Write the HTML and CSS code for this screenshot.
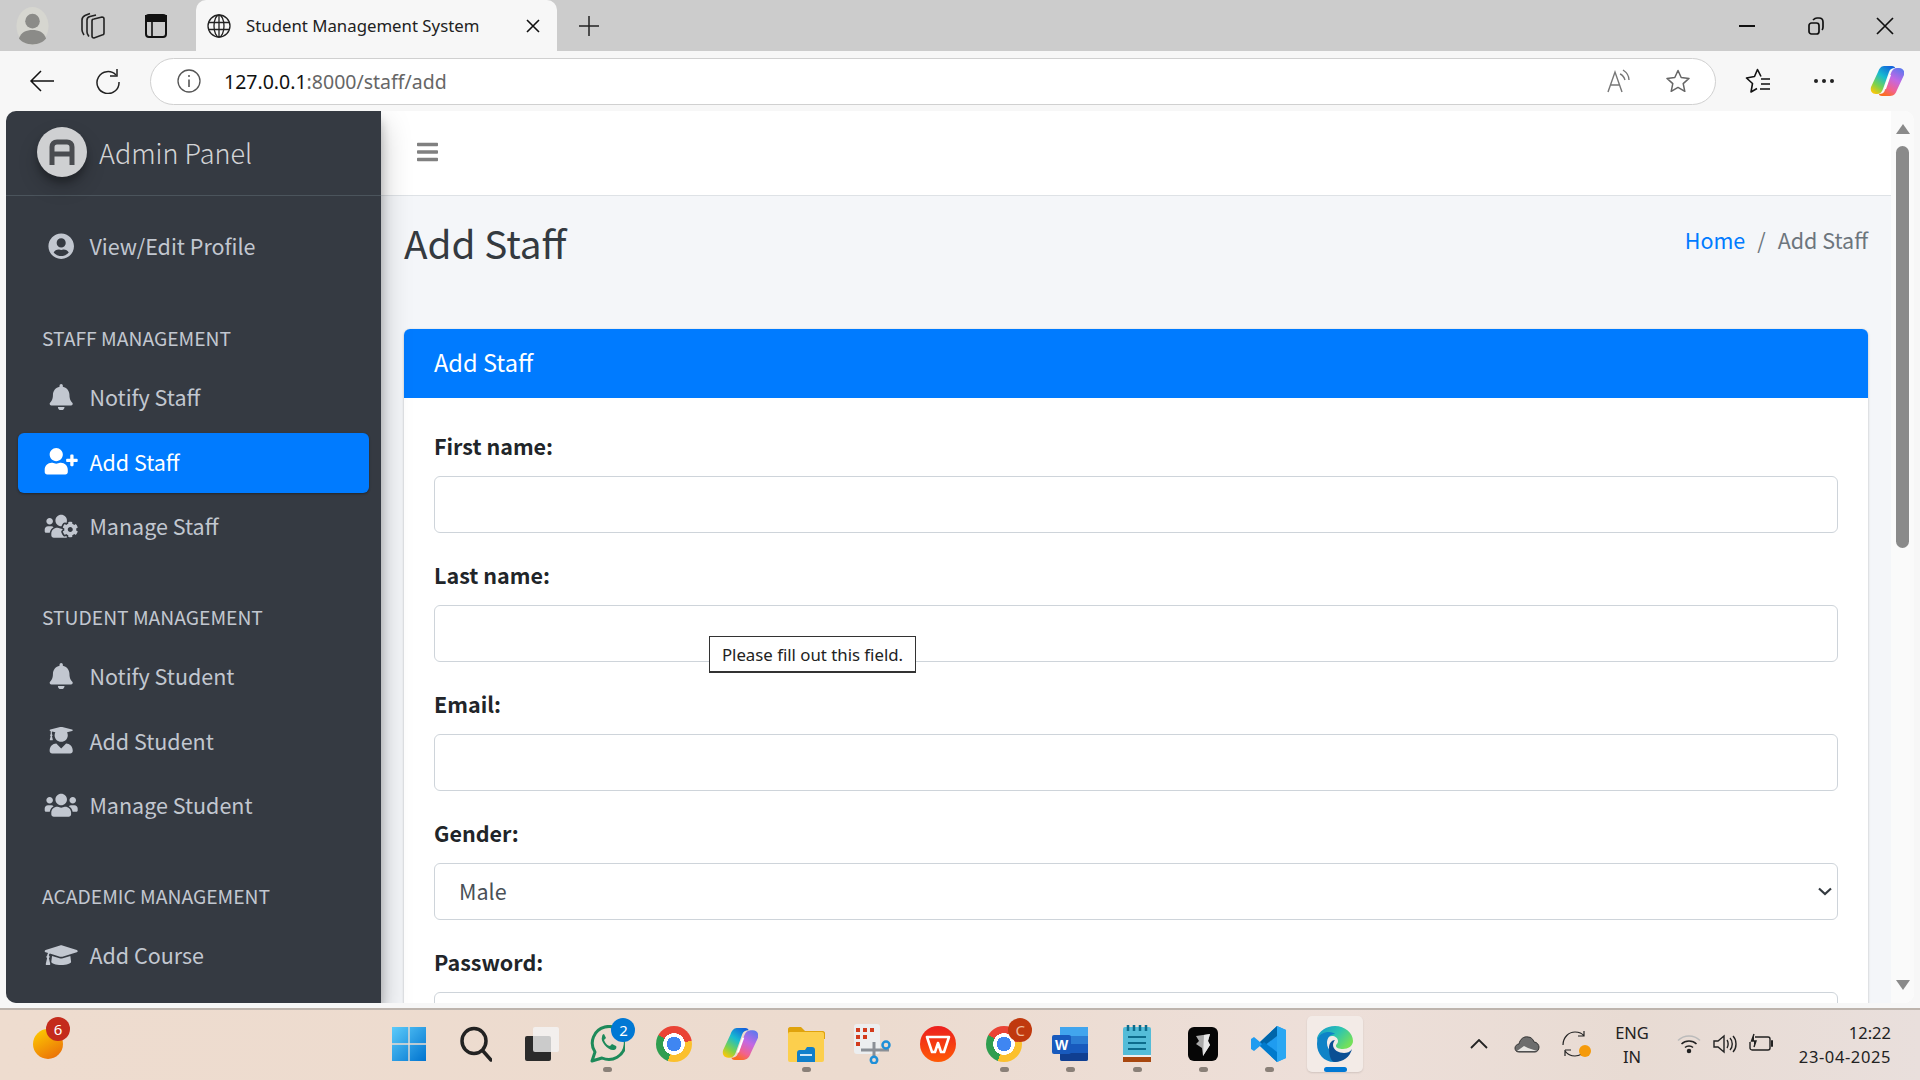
FILE: index.html
```html
<!DOCTYPE html>
<html lang="en">
<head>
    <meta charset="UTF-8">
    <meta name="viewport" content="width=device-width, initial-scale=1.0">
    <title>Student Management System</title>
    <link rel="stylesheet" href="styles.css">
</head>
<body>
<div class="screen">

    <!-- browser tabs -->
    <div class="tabstrip">
        <svg class="avatar" viewBox="0 0 34 40"><ellipse cx="17" cy="20" rx="16.5" ry="19.5" fill="#d6d6d0"/><circle cx="17" cy="15" r="7.5" fill="#8b8b88"/><path d="M3 33c2-7 8-9 14-9s12 2 14 9c-3 4-8 6-14 6S6 37 3 33z" fill="#8b8b88"/></svg>
        <svg class="strip-icon collections" viewBox="0 0 24 28" fill="none" stroke="#222" stroke-width="1.600"><path d="M11 9c0-1 1-2 2-2l8-2c1 0 2 1 2 2v14c0 1-1 2-2 2l-8 3c-1 0-2-1-2-2z"/><path d="M15 3l-6 1.500c-2 .5-3 2-3 3.500v12c0 2 1 3 2 4.500"/><path d="M9 1.500 4 3.500C2 4.500 1 6 1 8v10c0 2 1 3.500 2 5"/></svg>
        <svg class="strip-icon sidepane" viewBox="0 0 24 28" fill="none" stroke="#111" stroke-width="2"><rect x="2" y="3" width="20" height="22" rx="3"/><path d="M2 4h20v5H2z" fill="#111"/><path d="M8 9v15" stroke-width="1.600"/></svg>
        <div class="tab">
            <svg class="globe" viewBox="0 0 24 24" fill="none" stroke="#222" stroke-width="1.300"><circle cx="12" cy="12" r="11"/><ellipse cx="12" cy="12" rx="5" ry="11"/><path d="M1.500 8.500h21M1.500 15.500h21M12 1v22"/></svg>
            <span class="tab-title">Student Management System</span>
            <svg class="tab-close" viewBox="0 0 14 14" stroke="#111" stroke-width="1.600"><path d="M1 1l12 12M13 1 1 13"/></svg>
        </div>
        <svg class="new-tab" viewBox="0 0 20 20" stroke="#222" stroke-width="1.500"><path d="M10 0v20M0 10h20"/></svg>
        <div class="window-controls">
            <span class="win-btn"><svg width="16" height="16" viewBox="0 0 16 16" stroke="#111" stroke-width="2"><path d="M0 8h16"/></svg></span>
            <span class="win-btn"><svg width="18" height="18" viewBox="0 0 18 18" fill="none" stroke="#111" stroke-width="1.700"><rect x="2" y="6" width="10" height="11" rx="2.500"/><path d="M6 3c1-1 2-2 4-2h2c3 0 4 2 4 4v5c0 1 0 2-1 3"/></svg></span>
            <span class="win-btn"><svg width="18" height="18" viewBox="0 0 18 18" stroke="#111" stroke-width="1.700"><path d="M1 1l16 16M17 1 1 17"/></svg></span>
        </div>
    </div>

    <!-- address bar -->
    <div class="toolbar">
        <span class="tool-btn"><svg width="26" height="24" viewBox="0 0 26 24" fill="none" stroke="#111" stroke-width="1.500"><path d="M25 12H2M12 2 2 12l10 10"/></svg></span>
        <span class="tool-btn"><svg width="26" height="26" viewBox="0 0 26 26" fill="none" stroke="#222" stroke-width="1.500"><path d="M21 7a11 11 0 1 0 3 7"/><path d="M22 1v7h-7"/></svg></span>
        <div class="addressbar">
            <svg class="info-icon" viewBox="0 0 24 24" fill="none" stroke="#555" stroke-width="1.300"><circle cx="12" cy="12" r="11"/><path d="M12 10.500v7.500" stroke-width="1.600"/><circle cx="12" cy="7" r="1" fill="#555" stroke="none"/></svg>
            <span class="url"><span class="url-host">127.0.0.1</span>:8000/staff/add</span>
            <svg class="addr-icon read-aloud" viewBox="0 0 24 24" fill="none" stroke="#777" stroke-width="1.400"><path d="M1 23 8 3l7 20M4 16h8"/><path d="M13 5c3 1 4 3 5 6M16 1c3 2 6 5 6 10"/></svg>
            <svg class="addr-icon" viewBox="0 0 24 24" fill="none" stroke="#666" stroke-width="1.500"><path d="m12 1.500 3.200 7 7.800.9-5.800 5.200 1.600 7.700L12 18.400l-6.800 3.900 1.600-7.700L1 9.400l7.800-.9z" stroke-linejoin="round"/></svg>
        </div>
        <span class="tool-btn"><svg width="26" height="26" viewBox="0 0 26 26" fill="none" stroke="#111" stroke-width="1.600" stroke-linejoin="round"><path d="M16 8.500 12.500 1.500 9.500 8.500 1.500 10l6 5.500-1.500 8.500 6-3.500"/><path d="M16 11h9M16 16h9M15 21h10"/></svg></span>
        <span class="tool-btn"><svg width="22" height="6" viewBox="0 0 22 6" fill="#222"><circle cx="3" cy="3" r="2"/><circle cx="11" cy="3" r="2"/><circle cx="19" cy="3" r="2"/></svg></span>
        <span class="tool-btn copilot-slot"><svg width="34" height="32" viewBox="0 0 34 32"><use href="#copilot-mark"/></svg></span>
    </div>

    <!-- page -->
    <div class="frame">
        <div class="viewport">
            <aside class="sidebar">
                <div class="brand">
                    <span class="brand-logo"><svg width="26" height="26" viewBox="0 0 26 26" fill="none" stroke="#4a4c50" stroke-width="5"><path d="M3 26V8c0-3 2-5 5-5h10c3 0 5 2 5 5v18M3 15h20"/></svg></span>
                    <span class="brand-text">Admin Panel</span>
                </div>
                <nav class="side-nav">
                    <a class="nav-link nav-profile" href="#"><svg class="nav-icon" viewBox="0 0 496 512"><path d="M248 8C111 8 0 119 0 256s111 248 248 248 248-111 248-248S385 8 248 8zm0 96c48.600 0 88 39.400 88 88s-39.400 88-88 88-88-39.400-88-88 39.400-88 88-88zm0 344c-58.700 0-111.300-26.600-146.500-68.200 18.800-35.400 55.600-59.800 98.500-59.800 2.400 0 4.800.4 7.100 1.100 13 4.200 26.600 6.900 40.900 6.900 14.300 0 28-2.700 40.900-6.900 2.300-.7 4.700-1.100 7.100-1.100 42.900 0 79.700 24.400 98.500 59.800C359.300 421.400 306.700 448 248 448z"/></svg>View/Edit Profile</a>

                    <div class="nav-header">STAFF MANAGEMENT</div>
                    <a class="nav-link" href="#"><svg class="nav-icon" viewBox="0 0 448 512"><use href="#fa-bell"/></svg>Notify Staff</a>
                    <a class="nav-link active" href="#"><svg class="nav-icon" viewBox="0 0 640 512"><path d="M624 208h-64v-64c0-8.800-7.200-16-16-16h-32c-8.800 0-16 7.200-16 16v64h-64c-8.800 0-16 7.200-16 16v32c0 8.800 7.200 16 16 16h64v64c0 8.800 7.200 16 16 16h32c8.800 0 16-7.200 16-16v-64h64c8.800 0 16-7.200 16-16v-32c0-8.800-7.200-16-16-16zm-400 48c70.700 0 128-57.300 128-128S294.700 0 224 0 96 57.300 96 128s57.300 128 128 128zm89.600 32h-16.700c-22.200 10.200-46.900 16-72.900 16s-50.600-5.800-72.900-16h-16.700C60.200 288 0 348.200 0 422.400V464c0 26.500 21.500 48 48 48h352c26.500 0 48-21.500 48-48v-41.600c0-74.200-60.200-134.400-134.400-134.400z"/></svg>Add Staff</a>
                    <a class="nav-link" href="#"><svg class="nav-icon" viewBox="0 0 640 512"><path d="M610.500 341.300c2.600-14.100 2.600-28.500 0-42.600l25.800-14.900c3-1.700 4.300-5.200 3.300-8.500-6.700-21.600-18.200-41.200-33.200-57.400-2.300-2.500-6-3.100-9-1.400l-25.800 14.900c-10.900-9.300-23.400-16.500-36.900-21.300v-29.800c0-3.400-2.400-6.400-5.700-7.100-22.300-5-45-4.800-66.200 0-3.300.7-5.700 3.700-5.700 7.100v29.800c-13.500 4.800-26 12-36.900 21.300l-25.800-14.900c-2.900-1.700-6.700-1.100-9 1.400-15 16.200-26.500 35.800-33.200 57.400-1 3.300.4 6.800 3.300 8.500l25.800 14.900c-2.600 14.100-2.600 28.500 0 42.600l-25.800 14.900c-3 1.700-4.300 5.200-3.300 8.500 6.700 21.600 18.200 41.100 33.200 57.400 2.300 2.500 6 3.100 9 1.400l25.800-14.900c10.900 9.300 23.400 16.500 36.900 21.300v29.800c0 3.400 2.400 6.400 5.700 7.100 22.300 5 45 4.800 66.200 0 3.300-.7 5.700-3.700 5.700-7.100v-29.800c13.500-4.800 26-12 36.900-21.300l25.800 14.900c2.900 1.700 6.700 1.100 9-1.400 15-16.200 26.500-35.800 33.200-57.400 1-3.300-.4-6.800-3.300-8.500l-25.800-14.900zM496 368.500c-26.800 0-48.500-21.800-48.500-48.500s21.800-48.500 48.500-48.500 48.500 21.800 48.500 48.500-21.700 48.500-48.500 48.500zM96 224c35.300 0 64-28.700 64-64s-28.700-64-64-64-64 28.700-64 64 28.700 64 64 64zm224 32c1.900 0 3.700-.5 5.600-.6 8.300-21.700 20.500-42.100 36.300-59.200 7.400-8 17.900-12.600 28.900-12.600 6.900 0 13.700 1.800 19.600 5.300l7.900 4.600c.8-.5 1.600-.9 2.400-1.400 7-14.600 11.200-30.800 11.200-48 0-61.900-50.100-112-112-112S208 82.100 208 144c0 61.900 50.100 112 112 112zm105.200 194.500c-2.300-1.200-4.600-2.600-6.800-3.900-8.200 4.800-15.300 9.800-27.500 9.800-10.900 0-21.400-4.600-28.900-12.600-18.300-19.800-32.300-43.900-40.200-69.600-10.700-34.500 24.900-49.700 25.800-50.300-.1-2.600-.1-5.200 0-7.800l-7.900-4.600c-3.800-2.200-7-5-9.800-8.100-3.300.2-6.500.6-9.800.6-24.600 0-47.600-6-68.500-16h-8.300C179.600 288 128 339.600 128 403.200V432c0 26.500 21.500 48 48 48h255.400c-3.700-6-6.200-12.800-6.200-20.300v-9.200zM173.100 274.600C161.500 263.100 145.600 256 128 256H64c-35.300 0-64 28.700-64 64v32c0 17.700 14.300 32 32 32h65.900c6.300-47.400 34.900-87.300 75.200-109.400z"/></svg>Manage Staff</a>

                    <div class="nav-header">STUDENT MANAGEMENT</div>
                    <a class="nav-link" href="#"><svg class="nav-icon" viewBox="0 0 448 512"><use href="#fa-bell"/></svg>Notify Student</a>
                    <a class="nav-link" href="#"><svg class="nav-icon" viewBox="0 0 448 512"><path d="M319.400 320.600L224 416l-95.400-95.400C57.100 323.700 0 382.200 0 454.400v9.600c0 26.500 21.500 48 48 48h352c26.500 0 48-21.500 48-48v-9.600c0-72.200-57.100-130.700-128.600-133.800zM13.600 79.800l6.400 1.500v58.400c-7 4.200-12 11.500-12 20.300 0 8.400 4.600 15.400 11.100 19.700L3.500 242c-1.700 6.900 2.100 14 7.600 14h41.800c5.500 0 9.300-7.100 7.600-14l-15.600-62.300C51.400 175.400 56 168.400 56 160c0-8.800-5-16.100-12-20.300V87.100l66 15.900c-8.600 17.200-14 36.400-14 57 0 70.700 57.300 128 128 128s128-57.300 128-128c0-20.600-5.300-39.800-14-57l96.300-23.200c18.200-4.400 18.200-27.100 0-31.500l-190.400-46c-13-3.100-26.700-3.100-39.700 0L13.600 48.200c-18.100 4.400-18.100 27.200 0 31.600z"/></svg>Add Student</a>
                    <a class="nav-link" href="#"><svg class="nav-icon" viewBox="0 0 640 512"><path d="M96 224c35.300 0 64-28.700 64-64s-28.700-64-64-64-64 28.700-64 64 28.700 64 64 64zm448 0c35.300 0 64-28.700 64-64s-28.700-64-64-64-64 28.700-64 64 28.700 64 64 64zm32 32h-64c-17.600 0-33.500 7.100-45.100 18.600 40.300 22.100 68.900 62 75.100 109.400h66c17.700 0 32-14.300 32-32v-32c0-35.300-28.700-64-64-64zm-256 0c61.900 0 112-50.100 112-112S381.900 32 320 32 208 82.100 208 144s50.100 112 112 112zm76.800 32h-8.300c-20.800 10-43.900 16-68.500 16s-47.600-6-68.500-16h-8.300C179.600 288 128 339.600 128 403.200V432c0 26.500 21.500 48 48 48h288c26.500 0 48-21.500 48-48v-28.800c0-63.600-51.600-115.200-115.200-115.200zm-223.700-13.400C161.500 263.100 145.600 256 128 256H64c-35.300 0-64 28.700-64 64v32c0 17.700 14.300 32 32 32h65.900c6.300-47.400 34.900-87.300 75.200-109.400z"/></svg>Manage Student</a>

                    <div class="nav-header">ACADEMIC MANAGEMENT</div>
                    <a class="nav-link" href="#"><svg class="nav-icon" viewBox="0 0 640 512"><path d="M622.340 153.200L343.400 67.500c-15.200-4.670-31.600-4.670-46.790 0L17.660 153.200c-23.540 7.230-23.540 38.360 0 45.590l48.630 14.940c-10.670 13.190-17.230 29.280-17.880 46.900C38.780 266.150 32 276.110 32 288c0 10.780 5.680 19.850 13.860 25.650L20.330 428.530C18.110 438.520 25.710 448 35.940 448h56.110c10.240 0 17.840-9.480 15.620-19.470L82.140 313.650C90.320 307.850 96 298.780 96 288c0-11.570-6.470-21.250-15.660-26.870.76-15.020 8.440-28.300 20.690-36.720L296.600 284.500c9.060 2.780 26.440 6.250 46.790 0l278.950-85.700c23.550-7.240 23.550-38.360 0-45.600zM352.790 315.090c-28.530 8.760-52.840 3.920-65.590 0l-145.020-44.550L128 384c0 35.350 85.960 64 192 64s192-28.650 192-64l-14.180-113.470-145.030 44.560z"/></svg>Add Course</a>
                </nav>
            </aside>

            <main class="main">
                <div class="navbar">
                    <svg class="bars" viewBox="0 0 448 512"><path d="M16 132h416c8.837 0 16-7.163 16-16V76c0-8.837-7.163-16-16-16H16C7.163 60 0 67.163 0 76v40c0 8.837 7.163 16 16 16zm0 160h416c8.837 0 16-7.163 16-16v-40c0-8.837-7.163-16-16-16H16c-8.837 0-16 7.163-16 16v40c0 8.837 7.163 16 16 16zm0 160h416c8.837 0 16-7.163 16-16v-40c0-8.837-7.163-16-16-16H16c-8.837 0-16 7.163-16 16v40c0 8.837 7.163 16 16 16z"/></svg>
                </div>
                <div class="content">
                    <div class="content-header">
                        <h1>Add Staff</h1>
                        <div class="breadcrumb"><a href="#">Home</a><span class="sep">/</span><span>Add Staff</span></div>
                    </div>
                    <div class="card">
                        <div class="card-header">Add Staff</div>
                        <form class="card-body">
                            <div class="form-group">
                                <label>First name:</label>
                                <input class="form-control" type="text">
                            </div>
                            <div class="form-group">
                                <label>Last name:</label>
                                <input class="form-control" type="text">
                                <div class="validation-tip">Please fill out this field.</div>
                            </div>
                            <div class="form-group">
                                <label>Email:</label>
                                <input class="form-control" type="text">
                            </div>
                            <div class="form-group">
                                <label>Gender:</label>
                                <div class="select-wrap">
                                    <select class="form-control">
                                        <option>Male</option>
                                        <option>Female</option>
                                    </select>
                                    <svg class="select-arrow" viewBox="0 0 14 9" fill="none" stroke="#343a40" stroke-width="2.200"><path d="M1 1.500 7 7l6-5.500"/></svg>
                                </div>
                            </div>
                            <div class="form-group">
                                <label>Password:</label>
                                <input class="form-control" type="password">
                            </div>
                        </form>
                    </div>
                </div>
            </main>

            <div class="scrollbar">
                <span class="arrow-up"></span>
                <span class="thumb"></span>
                <span class="arrow-down"></span>
            </div>
        </div>
    </div>

    <!-- windows taskbar -->
    <footer class="taskbar">
        <div class="widgets">
            <span class="weather"><span class="badge badge-red">6</span></span>
        </div>
        <div class="task-icons">
            <span class="task"><svg width="36" height="36" viewBox="0 0 36 36"><defs><linearGradient id="win" x1="0" y1="0" x2="1" y2="1"><stop offset="0" stop-color="#5ccbfa"/><stop offset="1" stop-color="#0073cf"/></linearGradient></defs><path d="M1 1h16.300v16.300H1zM18.700 1H35v16.300H18.700zM1 18.700h16.300V35H1zM18.700 18.700H35V35H18.700z" fill="url(#win)"/></svg></span>
            <span class="task"><svg width="34" height="36" viewBox="0 0 34 36" fill="none" stroke="#222" stroke-width="3.500" stroke-linecap="round"><ellipse cx="16" cy="15" rx="12" ry="12.500"/><path d="m25 25 8 9"/></svg></span>
            <span class="task"><svg width="36" height="36" viewBox="0 0 36 36"><rect x="2" y="10" width="26" height="25" rx="2" fill="#2b2b2b"/><rect x="10" y="1" width="26" height="25" rx="2" fill="#f4f4f4" fill-opacity=".8"/></svg></span>
            <span class="task on"><svg width="36" height="38" viewBox="0 0 36 38" fill="none" stroke="#1d8a5a" stroke-width="3"><path d="M3 36l3-9A16.500 16.500 0 1 1 13 33z" stroke-linejoin="round"/><path d="M13 12c-2 4 6 14 12 13 2 0 3-3 2-4l-4-2-2 2c-2 0-5-3-6-6l2-2-2-4c-1 0-2 1-2 3z" fill="#1d8a5a" stroke="none"/></svg><span class="badge badge-blue">2</span></span>
            <span class="task"><span class="chrome-icon"></span></span>
            <span class="task"><svg width="36" height="34" viewBox="0 0 34 32"><use href="#copilot-mark"/></svg></span>
            <span class="task on"><svg width="38" height="36" viewBox="0 0 38 36"><path d="M1 3c0-1 1-2 2-2h11l4 4h18c1 0 2 1 2 2v6H1z" fill="#e0a30c"/><rect x="1" y="6" width="36" height="30" rx="2" fill="#fccf4d"/><path d="M10 27c0-2 1-3 3-3h5l2-3h5c2 0 3 1 3 3v12H10z" fill="#0f7fcb"/><path d="M13 29h12" stroke="#cfe7f7" stroke-width="2"/></svg></span>
            <span class="task"><svg width="38" height="40" viewBox="0 0 38 40"><rect x="1" y="0" width="26" height="30" rx="3" fill="#eceef0"/><g fill="#d23b1d"><rect x="3" y="4" width="4" height="4"/><rect x="10" y="4" width="4" height="4"/><rect x="17" y="4" width="4" height="4"/><rect x="3" y="11" width="4" height="4"/><rect x="10" y="11" width="4" height="4"/><rect x="3" y="18" width="4" height="4"/></g><path d="M8 26h28M21 18v14" stroke="#8a8f96" stroke-width="3"/><g fill="none" stroke="#1e8fd8" stroke-width="2.500"><circle cx="33" cy="21" r="3.500"/><circle cx="21" cy="36" r="3.200"/></g></svg></span>
            <span class="task"><svg width="36" height="36" viewBox="0 0 36 36"><defs><linearGradient id="wps" x1="0" y1="0" x2="0" y2="1"><stop offset="0" stop-color="#ec1f1f"/><stop offset="1" stop-color="#ff5a06"/></linearGradient></defs><circle cx="18" cy="18" r="18" fill="url(#wps)"/><path d="M7 11h22l-5 15h-3l-3-9-3 9h-3z" fill="none" stroke="#fff" stroke-width="2.600" stroke-linejoin="round"/></svg></span>
            <span class="task on"><span class="chrome-icon"></span><span class="badge badge-brown">C</span></span>
            <span class="task on"><svg width="36" height="34" viewBox="0 0 36 34"><rect x="8" y="0" width="28" height="34" rx="2" fill="#2b7cd3"/><rect x="8" y="0" width="28" height="9" fill="#41a5ee"/><rect x="8" y="17" width="28" height="9" fill="#185abd"/><path d="M8 26h28v6c0 1-1 2-2 2H10c-1 0-2-1-2-2z" fill="#103f91"/><rect x="0" y="8" width="19" height="19" rx="2" fill="#185abd"/><text class="word-letter" x="9.500" y="22.500" text-anchor="middle">W</text></svg></span>
            <span class="task on"><svg width="30" height="38" viewBox="0 0 30 38"><rect x="1" y="2" width="28" height="30" rx="2" fill="#54bcd8"/><rect x="1" y="32" width="28" height="5" fill="#a8470f"/><path d="M1 31h28" stroke="#eee" stroke-width="2"/><path d="M6 12h18M6 18h18M6 24h18" stroke="#0d6c8c" stroke-width="2"/><path d="M6 0v6M12 0v6M18 0v6M24 0v6" stroke="#0d6c8c" stroke-width="2.500"/></svg></span>
            <span class="task on"><svg width="30" height="34" viewBox="0 0 30 34"><rect width="30" height="34" rx="6" fill="#060606"/><path d="M8 9l14-2-2 7 2 4-7 11-1-8-6-4 3-3z" fill="#aaa"/><path d="M16 8l6-1-2 7 2 4-7 11z" fill="#e8e8e8"/></svg></span>
            <span class="task on"><svg width="36" height="36" viewBox="0 0 36 36"><path d="M26 0 35 4v28l-9 4L9 20 3 25l-3-2v-10l3-2 6 5z" fill="#1f9cf0"/><path d="M26 0 9 16l4 4L26 10z" fill="#0065a9"/><path d="M26 36 9 20l4-4 13 10z" fill="#007acc"/><path d="M26 0l9 4v28l-9 4z" fill="#2aa7f3"/></svg></span>
            <span class="task task-active"><svg width="36" height="36" viewBox="0 0 36 36"><defs><linearGradient id="edge-a" x1="0" y1="0" x2="1" y2=".6"><stop offset="0" stop-color="#1596cf"/><stop offset=".55" stop-color="#2dc5b0"/><stop offset="1" stop-color="#74e05a"/></linearGradient></defs><path d="M18 0c10 0 18 7 18 15 0 5-5 8-10 8-4 0-7-1-7-3 0-2 2-2 2-5 0-3-3-5-6-5-4 0-8 3-9 7-3 0-6-2-6-5C2 5 9 0 18 0z" fill="url(#edge-a)"/><path d="M0 18C0 8 7 6 12 6c3 0 5 1 6 2-5 0-8 4-8 9 0 7 6 12 14 12 3 0 5-1 7-2-3 5-8 9-14 9C7 36 0 28 0 18z" fill="#0f83c7"/><path d="M12 22c0-5 3-8 6-8-1 1-2 3-2 5 0 5 6 8 11 8 3 0 6-1 8-4-2 8-9 13-17 13-4 0-6-6-6-14z" fill="#0b4f94"/></svg></span>
        </div>
        <div class="tray">
            <span class="tray-item slot-wide"><svg width="18" height="10" viewBox="0 0 18 10" fill="none" stroke="#222" stroke-width="1.800"><path d="M1 9l8-8 8 8"/></svg></span>
            <span class="tray-item slot-wide"><svg width="26" height="18" viewBox="0 0 26 18"><path d="M5 17c-3 0-4-2-4-4s2-4 4-4c1-5 5-8 9-7 3 0 5 2 6 5 3 0 5 3 5 5 0 3-2 5-4 5z" fill="#6d6d6d" stroke="#333"/><path d="M3 16l7-5 4 2 9 3z" fill="#e8e6e3"/></svg></span>
            <span class="tray-item slot-wide sync"><svg width="26" height="26" viewBox="0 0 26 26" fill="none" stroke="#222" stroke-width="1.200"><path d="M1 14C1 6 7 1 13 1c4 0 7 1 9 4M22 0v5h-6M3 19v6M3 19h6M3 20c3 4 6 5 10 5 3 0 5-1 7-2"/></svg><span class="sync-dot"></span></span>
            <span class="tray-lang">ENG<br>IN</span>
            <span class="tray-item slot-narrow first-narrow"><svg width="24" height="20" viewBox="0 0 24 20" fill="none" stroke="#222" stroke-width="1.500"><path d="M1 6.500c6-6 16-6 22 0" stroke="#bbb"/><path d="M4.500 10c4-4 11-4 15 0M8 13.500c2-2 6-2 8 0"/><circle cx="12" cy="17" r="1.500" fill="#222"/></svg></span>
            <span class="tray-item slot-narrow"><svg width="24" height="20" viewBox="0 0 24 20" fill="none" stroke="#222" stroke-width="1.400"><path d="M1 7h4l6-5v16l-6-5H1z"/><path d="M14 6c1.500 2 1.500 6 0 8M17 4c3 3 3 9 0 12M20 2c4 4 4 12 0 16"/></svg></span>
            <span class="tray-item slot-narrow"><svg width="24" height="22" viewBox="0 0 24 22" fill="none" stroke="#222" stroke-width="1.400"><path d="M6 4H19c1 0 2 1 2 2v9c0 1-1 2-2 2H3c-1 0-2-1-2-2V9"/><path d="M22 8h2v5h-2" fill="#222"/><path d="M5 1 2.500 8H7L5 14" fill="#222"/></svg></span>
            <div class="clock">12:22<br><span class="clock-date">23-04-2025</span></div>
        </div>
    </footer>
</div>

<!-- shared shapes -->
<svg class="defs" width="0" height="0">
    <defs>
        <linearGradient id="cp-a" x1=".8" y1="0" x2=".2" y2="1"><stop offset="0" stop-color="#1262dc"/><stop offset=".4" stop-color="#18bcd0"/><stop offset=".75" stop-color="#7fd24a"/><stop offset="1" stop-color="#f7c70c"/></linearGradient>
        <linearGradient id="cp-b" x1=".8" y1="0" x2=".3" y2="1"><stop offset="0" stop-color="#5f78ee"/><stop offset=".4" stop-color="#c268e4"/><stop offset=".75" stop-color="#f2628e"/><stop offset="1" stop-color="#fb6d22"/></linearGradient>
        <path id="fa-bell" d="M224 512c35.320 0 63.970-28.650 63.970-64H160.030c0 35.350 28.650 64 63.970 64zm215.390-149.710c-19.320-20.760-55.470-51.990-55.470-154.290 0-77.700-54.480-139.900-127.940-155.160V32c0-17.670-14.320-32-31.980-32s-31.980 14.330-31.980 32v20.840C118.560 68.100 64.080 130.300 64.080 208c0 102.300-36.150 133.530-55.470 154.290-6 6.450-8.660 14.160-8.610 21.710.11 16.400 12.980 32 32.100 32h383.800c19.120 0 32-15.600 32.100-32 .05-7.550-2.610-15.270-8.610-21.710z"/>
        <g id="copilot-mark">
            <path d="M14 1h8c2 0 3 1 3 2-3 0-5 1-6 4l-6 17c-1 3-3 5-6 5H6C2 29 0 26 1 22L8 7c1-3 3-6 6-6z" fill="url(#cp-a)"/>
            <path d="M20 31h-8c-2 0-3-1-3-2 3 0 5-1 6-4l6-17c1-3 3-5 6-5h2c4 0 6 3 5 7l-7 15c-1 3-3 6-7 6z" fill="url(#cp-b)"/>
            <path d="M21 10h-2l-5 14h2z" fill="#fff"/>
        </g>
    </defs>
</svg>
</body>
</html>
```

FILE: styles.css
```css
* {
    margin: 0;
    padding: 0;
    box-sizing: border-box;
}

:root {
    --sidebar-bg: #353a42;
    --sidebar-text: #c2c7d0;
    --blue: #007bff;
    --page-font: "Noto Sans CJK SC", "Noto Sans", sans-serif;
    --ui-font: "Noto Sans", "Open Sans", sans-serif;
}

html, body {
    height: 100%;
    overflow: hidden;
}

body {
    background: #f7f7f7;
    font-family: var(--page-font);
    color: #212529;
}

a {
    text-decoration: none;
}

.defs {
    display: block;
    height: 0;
}

.screen {
    display: flex;
    flex-direction: column;
    height: 100vh;
}

/* tabs */
.tabstrip {
    display: flex;
    align-items: center;
    height: 51px;
    flex: none;
    background: #cccccc;
}

.avatar {
    width: 33px;
    height: 40px;
    margin-left: 16px;
}

.strip-icon {
    width: 24px;
    height: 28px;
}

.collections {
    margin-left: 32px;
}

.sidepane {
    margin-left: 39px;
}

.tab {
    display: flex;
    align-items: center;
    align-self: flex-end;
    width: 361px;
    height: 51px;
    margin-left: 28px;
    padding-left: 11px;
    background: #f7f7f7;
    border-radius: 10px 10px 0 0;
}

.globe {
    width: 24px;
    height: 24px;
    flex: none;
}

.tab-title {
    margin-left: 15px;
    margin-bottom: 1px;
    font-family: var(--ui-font);
    font-size: 16.800px;
    color: #222;
    white-space: nowrap;
}

.tab-close {
    width: 14px;
    height: 14px;
    margin-left: auto;
    margin-right: 17px;
}

.new-tab {
    width: 20px;
    height: 20px;
    margin-left: 22px;
}

.window-controls {
    display: flex;
    margin-left: auto;
    margin-right: 1px;
}

.win-btn {
    display: flex;
    align-items: center;
    justify-content: center;
    width: 69px;
    height: 51px;
}

/* address bar */
.toolbar {
    display: flex;
    align-items: center;
    height: 60px;
    flex: none;
    padding-left: 9px;
    padding-right: 3px;
    background: #f7f7f7;
}

.tool-btn {
    display: flex;
    align-items: center;
    justify-content: center;
    width: 66px;
    flex: none;
}

.copilot-slot {
    width: 60px;
}

.addressbar {
    display: flex;
    align-items: center;
    flex: 1;
    height: 47px;
    margin: 0 9px;
    padding: 0 25px 0 26px;
    background: #fff;
    border: 1.500px solid #d0d0d0;
    border-radius: 24px;
}

.info-icon {
    width: 24px;
    height: 24px;
}

.url {
    margin-left: 23px;
    font-family: var(--ui-font);
    font-size: 19.500px;
    color: #666;
}

.url-host {
    color: #111;
}

.addr-icon {
    width: 24px;
    height: 24px;
    margin-left: 35px;
}

.read-aloud {
    margin-left: auto;
}

/* page frame */
.frame {
    flex: 1;
    min-height: 0;
    padding: 0 6px 5px;
}

.viewport {
    display: flex;
    height: 100%;
    overflow: hidden;
    background: #fff;
    border-radius: 10px;
}

.sidebar {
    position: relative;
    z-index: 2;
    width: 375px;
    flex: none;
    background: var(--sidebar-bg);
    box-shadow: 0 14px 28px rgba(0, 0, 0, .25), 0 10px 10px rgba(0, 0, 0, .22);
}

.brand {
    display: flex;
    align-items: center;
    height: 85px;
    padding-left: 31px;
    border-bottom: 1px solid #4b545c;
}

.brand-logo {
    display: flex;
    align-items: center;
    justify-content: center;
    width: 50px;
    height: 50px;
    margin-top: -2px;
    background: #cfd0d2;
    border-radius: 50%;
    box-shadow: 0 10px 20px rgba(0, 0, 0, .19), 0 6px 6px rgba(0, 0, 0, .23);
}

.brand-text {
    margin-left: 12px;
    margin-bottom: 2px;
    font-size: 27px;
    font-weight: 300;
    line-height: 45px;
    color: rgba(255, 255, 255, .8);
}

.side-nav {
    padding: 20px 12px 0;
}

.nav-link {
    display: flex;
    align-items: center;
    height: 60px;
    margin-bottom: 4.500px;
    padding-left: 24px;
    padding-bottom: 2px;
    font-size: 21.500px;
    line-height: 36px;
    color: var(--sidebar-text);
    border-radius: 6px;
}

.nav-profile {
    margin-bottom: 34px;
    padding-bottom: 0;
}

.nav-link.active {
    background: var(--blue);
    color: #fff;
    box-shadow: 0 1px 3px rgba(0, 0, 0, .12), 0 1px 2px rgba(0, 0, 0, .24);
}

.nav-icon {
    width: 38.400px;
    height: 26.400px;
    margin-right: 9px;
    fill: currentColor;
    flex: none;
}

/* margin collapses with the link above, so this is the whole gap */
.nav-header {
    height: 58px;
    margin-top: 32px;
    padding-left: 24px;
    font-size: 19.300px;
    line-height: 56px;
    color: var(--sidebar-text);
}

/* main */
.main {
    flex: 1;
    min-width: 0;
    display: flex;
    flex-direction: column;
    overflow: hidden;
    background: #f4f6f9;
}

.navbar {
    display: flex;
    align-items: center;
    height: 85px;
    flex: none;
    padding-left: 36px;
    padding-bottom: 2px;
    background: #fff;
    border-bottom: 1px solid #dee2e6;
}

.bars {
    width: 21px;
    height: 24px;
    fill: #808080;
}

.content {
    padding: 0 23px;
}

.content-header {
    display: flex;
    justify-content: space-between;
    align-items: flex-start;
    height: 133px;
    padding-top: 20px;
}

h1 {
    font-size: 38.700px;
    font-weight: 400;
    line-height: 52px;
    color: #343a40;
}

.breadcrumb {
    margin-top: 6px;
    font-size: 21.500px;
    line-height: 36px;
    color: #6c757d;
}

.breadcrumb a {
    color: var(--blue);
}

.sep {
    padding: 0 12px;
}

.card {
    background: #fff;
    border-radius: 6px;
    box-shadow: 0 0 1px rgba(0, 0, 0, .125), 0 1px 3px rgba(0, 0, 0, .2);
}

.card-header {
    height: 69px;
    padding-left: 30px;
    font-size: 23.600px;
    line-height: 67px;
    color: #fff;
    background: var(--blue);
    border-radius: 6px 6px 0 0;
}

.card-body {
    padding: 30px 30px 0;
}

.form-group {
    position: relative;
    margin-bottom: 24px;
}

label {
    display: block;
    margin-bottom: 13px;
    font-size: 21.500px;
    font-weight: 700;
    line-height: 35px;
}

.form-control {
    display: block;
    width: 100%;
    height: 57px;
    padding: 0 18px 2px 24px;
    font-family: var(--page-font);
    font-size: 21.500px;
    color: #495057;
    background: #fff;
    border: 1.500px solid #ced4da;
    border-radius: 6px;
    appearance: none;
    outline: none;
}

.select-wrap {
    position: relative;
}

.select-arrow {
    position: absolute;
    top: 24px;
    right: 6px;
    width: 14px;
    height: 9px;
}

.validation-tip {
    position: absolute;
    top: 79px;
    left: 275px;
    width: 207px;
    height: 37px;
    font-family: var(--ui-font);
    font-size: 16.800px;
    line-height: 35px;
    text-align: center;
    color: #222;
    background: #fff;
    border: 1px solid #333;
    border-bottom-width: 2px;
}

/* fake scrollbar */
.scrollbar {
    display: flex;
    flex-direction: column;
    align-items: center;
    width: 23px;
    flex: none;
    padding-top: 13px;
    background: #fafafa;
}

.arrow-up,
.arrow-down {
    width: 0;
    height: 0;
    border-left: 7px solid transparent;
    border-right: 7px solid transparent;
}

.arrow-up {
    border-bottom: 10px solid #8a8a8a;
}

.arrow-down {
    margin-top: auto;
    margin-bottom: 13px;
    border-top: 10px solid #8a8a8a;
}

.thumb {
    width: 13px;
    height: 402px;
    margin-top: 12px;
    background: #8a8a8a;
    border-radius: 7px;
}

/* taskbar */
.taskbar {
    display: flex;
    height: 72px;
    flex: none;
    background: linear-gradient(90deg, #eedccf 0%, #ecdbcf 45%, #eddfd9 70%, #e8dbd3 85%, #e9dfdc 100%);
    border-top: 2px solid #bdb4ad;
}

.widgets {
    position: relative;
    width: 376px;
    flex: none;
}

.weather {
    position: absolute;
    left: 33px;
    top: 19px;
    width: 30px;
    height: 30px;
    border-radius: 50%;
    background: linear-gradient(150deg, #ffd000, #e8660a);
}

.task-icons {
    display: flex;
    width: 992px;
    flex: none;
}

.task {
    position: relative;
    display: flex;
    align-items: center;
    justify-content: center;
    width: 66.150px;
    padding-bottom: 2px;
}

.task.on::after {
    content: "";
    position: absolute;
    bottom: 8px;
    left: 29px;
    width: 9px;
    height: 5px;
    background: #8a8078;
    border-radius: 3px;
}

.task-active {
    margin: 6px 5px 8px;
    width: 56px;
    padding-bottom: 0;
    background: #f3ebe7;
    border-radius: 5px;
    box-shadow: 0 1px 2px rgba(0, 0, 0, .12);
}

.task-active::after {
    content: "";
    position: absolute;
    bottom: 0;
    left: 17px;
    width: 23px;
    height: 5px;
    background: #0078d4;
    border-radius: 3px;
}

.chrome-icon {
    display: block;
    width: 36px;
    height: 36px;
    border-radius: 50%;
    background:
        radial-gradient(circle, #3f86f2 0 28%, #fff 29% 42%, transparent 43%),
        conic-gradient(#ea4335 0deg 80deg, #fbc02d 80deg 200deg, #2f9e4f 200deg 300deg, #ea4335 300deg);
}

.badge {
    position: absolute;
    display: block;
    width: 24px;
    height: 24px;
    font-family: var(--ui-font);
    font-size: 15px;
    line-height: 24px;
    text-align: center;
    color: #fff;
    border-radius: 50%;
}

.badge-red {
    left: 13px;
    top: -12px;
    background: #c42b1c;
}

.badge-blue {
    top: 8px;
    left: 37px;
    background: #0078d4;
}

.badge-brown {
    top: 8px;
    left: 37px;
    color: #eebc9c;
    background: #c0390e;
}

.word-letter {
    font-family: "Liberation Sans", sans-serif;
    font-size: 14px;
    font-weight: 700;
    fill: #fff;
}

.tray {
    display: flex;
    align-items: center;
    flex: 1;
    margin-left: 87px;
}

.tray-item {
    position: relative;
    display: flex;
    align-items: center;
    justify-content: center;
    flex: none;
    margin-top: -2px;
}

.slot-wide {
    width: 48px;
}

.slot-narrow {
    width: 36px;
}

.first-narrow {
    margin-left: 6px;
}

.sync-dot {
    position: absolute;
    right: 8px;
    bottom: 0;
    width: 12px;
    height: 12px;
    background: #f59a0a;
    border-radius: 50%;
}

.tray-lang {
    width: 66px;
    flex: none;
    font-family: var(--ui-font);
    font-size: 16.500px;
    line-height: 24px;
    text-align: center;
    color: #222;
}

.clock {
    flex: 1;
    padding-right: 29px;
    font-family: var(--ui-font);
    font-size: 16.500px;
    line-height: 24px;
    text-align: right;
    color: #222;
}

.clock-date {
    letter-spacing: .6px;
}
```
